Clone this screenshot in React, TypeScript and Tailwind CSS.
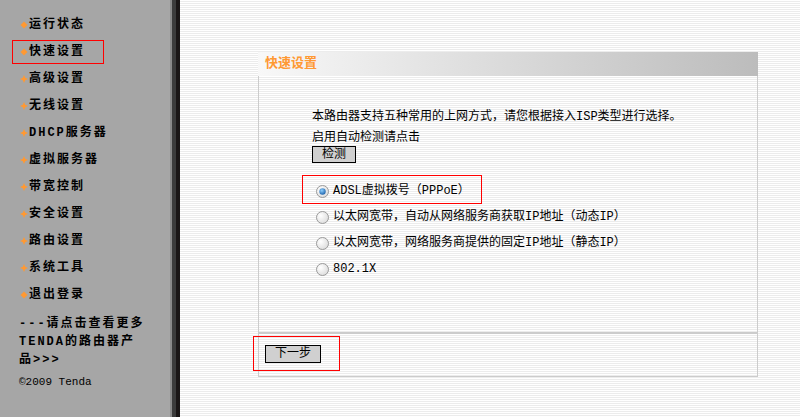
import React from "react"

const menu = [
  { label: "运行状态", diamond: true },
  { label: "快速设置", diamond: true },
  { label: "高级设置" },
  { label: "无线设置" },
  { label: "DHCP服务器" },
  { label: "虚拟服务器" },
  { label: "带宽控制" },
  { label: "安全设置" },
  { label: "路由设置" },
  { label: "系统工具" },
  { label: "退出登录", diamond: true },
]

const options = [
  "ADSL虚拟拨号（PPPoE）",
  "以太网宽带，自动从网络服务商获取IP地址（动态IP）",
  "以太网宽带，网络服务商提供的固定IP地址（静态IP）",
  "802.1X",
]

function Bullet({ diamond }: { diamond?: boolean }) {
  return (
    <svg width="8" height="8" viewBox="0 0 8 8" className="shrink-0 block">
      {diamond ? (
        <path d="M4 0.5 L7.5 4 L4 7.5 L0.5 4Z" fill="#ff9933" />
      ) : (
        <path d="M4 0 L5.2 2.8 L8 4 L5.2 5.2 L4 8 L2.8 5.2 L0 4 L2.8 2.8Z" fill="#ff9933" />
      )}
    </svg>
  )
}

function Radio({ checked }: { checked?: boolean }) {
  return (
    <svg width="13" height="13" viewBox="0 0 13 13" className="shrink-0 block">
      <defs>
        <radialGradient id="rg" cx="0.35" cy="0.35" r="0.8">
          <stop offset="0" stopColor="#ffffff" />
          <stop offset="1" stopColor="#d8d8d8" />
        </radialGradient>
        <radialGradient id="dot" cx="0.4" cy="0.35" r="0.7">
          <stop offset="0" stopColor="#8fd0ff" />
          <stop offset="1" stopColor="#1a5fa8" />
        </radialGradient>
      </defs>
      <circle cx="6.5" cy="6.5" r="6" fill="url(#rg)" stroke="#9a9a9a" strokeWidth="1" />
      {checked && <circle cx="6.5" cy="6.5" r="3.2" fill="url(#dot)" />}
    </svg>
  )
}

export default function App() {
  const mono = { fontFamily: '"Liberation Mono", "Noto Sans CJK SC", monospace' }

  return (
    <div className="relative flex w-[800px] h-[417px] overflow-hidden bg-white text-black" style={mono}>
      {/* sidebar */}
      <div className="w-[170px] h-full bg-[#a6a6a6] pt-[11px]">
        {menu.map((m) => (
          <div key={m.label} className="flex items-center h-[27px] pl-[20px] gap-[1px]">
            <Bullet diamond={m.diamond} />
            <span className="text-[12px] font-bold tracking-[2px] leading-none">{m.label}</span>
          </div>
        ))}
        <div className="pl-[19px] mt-[7px] text-[12px] font-bold tracking-[2px] leading-[18px]">
          ---请点击查看更多
          <br />
          TENDA的路由器产
          <br />
          品&gt;&gt;&gt;
        </div>
        <div className="pl-[19px] mt-[6px] text-[11px] leading-[14px]">©2009 Tenda</div>
      </div>
      <div className="w-[2px] h-full bg-[#8a8a8a]" />
      <div className="w-[4px] h-full bg-[#3c3c3c]" />
      <div className="w-[4px] h-full bg-[#1a1616]" />

      {/* main */}
      <div className="flex-1 h-full bg-[repeating-linear-gradient(to_bottom,#ffffff_0px,#ffffff_1px,#ececec_1px,#ececec_2px)] pl-[78px] pt-[52px]">
        <div className="w-[500px]">
          <div className="h-[24px] flex items-center pl-[7px] bg-[linear-gradient(to_right,#f8f8f8,#bcbcbc)]">
            <span className="text-[13px] font-bold text-[#ff9933]">快速设置</span>
          </div>
          <div className="h-[256px] border-x border-[#cccccc] pl-[53px] pt-[33px] text-[12px]">
            <div className="leading-[16px]">本路由器支持五种常用的上网方式，请您根据接入ISP类型进行选择。</div>
            <div className="leading-[16px] mt-[5px]">启用自动检测请点击</div>
            <button className="w-[44px] h-[17px] bg-[#d0d0d0] border border-black text-[12px] leading-none flex items-center justify-center">
              检测
            </button>
            <div className="mt-[15px]">
              {options.map((o, i) => (
                <div key={o} className="flex items-center h-[26px] pl-[4px] gap-[4px]">
                  <Radio checked={i === 0} />
                  <span className="leading-none">{o}</span>
                </div>
              ))}
            </div>
          </div>
          <div className="h-[45px] border-x border-b border-t-2 border-[#cccccc] pl-[6px] pt-[11px]">
            <button className="w-[56px] h-[18px] bg-[#d0d0d0] border border-black text-[12px] leading-none flex items-center justify-center">
              下一步
            </button>
          </div>
        </div>
      </div>

      {/* annotation boxes */}
      <div className="absolute left-[12px] top-[40px] w-[92px] h-[24px] border border-[#ff0000]" />
      <div className="absolute left-[302px] top-[175px] w-[180px] h-[29px] border border-[#ff0000]" />
      <div className="absolute left-[253px] top-[336px] w-[87px] h-[35px] border border-[#ff0000]" />
    </div>
  )
}
